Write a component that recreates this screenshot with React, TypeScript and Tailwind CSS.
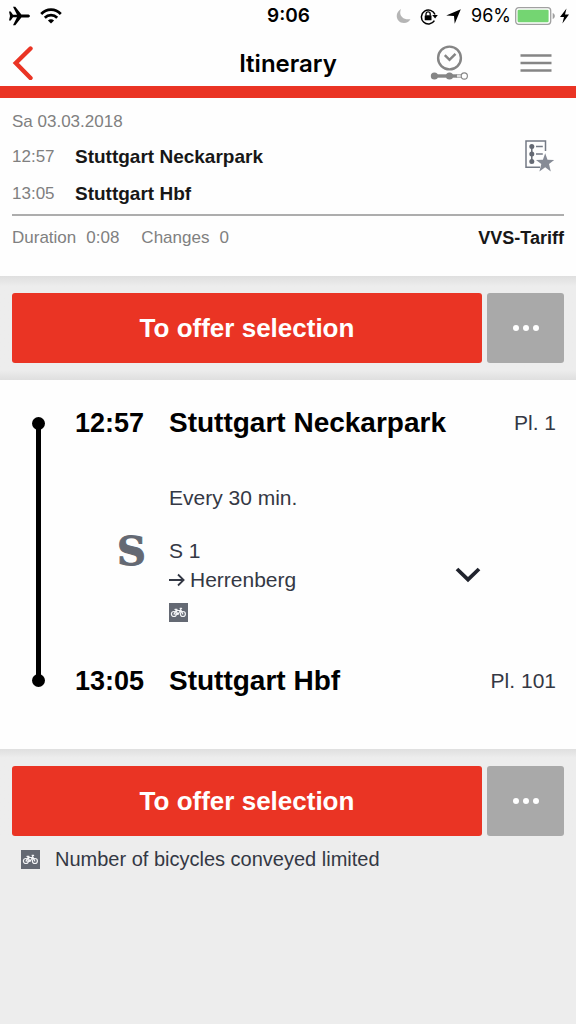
import React from "react";

function BikeIcon() {
  return (
    <svg className="h-[19px] w-[19px] shrink-0" viewBox="0 0 19 19" role="img" aria-label="Bicycle">
      <rect width="19" height="19" fill="#646973" />
      <g fill="none" stroke="#f4f5f7" strokeWidth="1.2" strokeLinecap="round" strokeLinejoin="round">
        <circle cx="4.9" cy="11" r="2.5" />
        <circle cx="13.9" cy="11" r="2.5" />
        <path d="M5 11 7 7.5H11.4L9 11.4ZM7 7.2 9 11.4M13.8 11 11.2 5.4H12.6M6 6.4H8" />
      </g>
    </svg>
  );
}

function StatusBar() {
  return (
    <div className="grid h-8 grid-cols-[1fr_auto_1fr] items-center pr-[7px] pl-2">
      <div className="flex items-center gap-2.5">
        <svg className="h-5 w-[22px]" viewBox="0 0 22 20" aria-hidden="true">
          <path
            d="M1 5.6H2.7L5 8.7H9L5 .8H7.3L13.4 8.5H19.6C21 8.5 22 9.2 22 10S21 11.5 19.6 11.5H13.4L7.3 19.2H5L9 11.3H5L2.7 14.4H1L2 10Z"
            fill="#000"
          />
        </svg>
        <svg className="h-4 w-[22px]" viewBox="0 0 22 16" aria-hidden="true">
          <g fill="none" stroke="#000" strokeWidth="2.7">
            <path d="M1.2 6C6.6.2 15.4.2 20.8 6" />
            <path d="M4.8 9.7C8.2 6.2 13.8 6.2 17.2 9.7" />
          </g>
          <path d="M11 15.6 7.9 12.6C9.6 10.9 12.4 10.9 14.1 12.6Z" fill="#000" />
        </svg>
      </div>
      <span className="font-[Inter,sans-serif] text-[19px] leading-8 font-semibold">9:06</span>
      <div className="flex items-center justify-end">
        <svg className="mr-[9px] h-4 w-[15px]" viewBox="0 0 15 16" aria-hidden="true">
          <path d="M5 1C-2 5 0 15 8 15C11 15 13.3 13.6 14.4 11.2C6.5 12.4 2.4 7 5 1Z" fill="#b5b5b5" />
        </svg>
        <svg className="mr-2 h-[17px] w-[18px]" viewBox="0 0 18 17" aria-hidden="true">
          <path d="M14.4 12.7A7 7 0 1 1 15 6.6" fill="none" stroke="#000" strokeWidth="1.5" />
          <path d="M12.2 7H17.8L15.1 10.4Z" fill="#000" />
          <rect x="4.7" y="7.3" width="6.8" height="5" rx=".6" fill="#000" />
          <path d="M6 7.5V6A2.1 2.1 0 0 1 10.2 6V7.5" fill="none" stroke="#000" strokeWidth="1.3" />
        </svg>
        <svg className="mr-2.5 h-[15px] w-[15px]" viewBox="0 0 15 15" aria-hidden="true">
          <path d="M14.8.2 8.7 14.8 8 7 .2 6.4Z" fill="#000" />
        </svg>
        <span className="mr-1 font-[Inter,sans-serif] text-[18px] leading-8">96%</span>
        <svg className="mr-1 h-[18px] w-[41px]" viewBox="0 0 41 18" aria-hidden="true">
          <rect x=".7" y=".7" width="35" height="16.6" rx="3" fill="#fff" stroke="#a0a0a0" strokeWidth="1.3" />
          <rect x="2.6" y="2.7" width="31" height="12.6" rx="1.2" fill="#74d572" />
          <path d="M37.7 6C40.5 7 40.5 11 37.7 12Z" fill="#a0a0a0" />
        </svg>
        <svg className="h-4 w-[9px]" viewBox="0 0 9 16" aria-hidden="true">
          <path d="M6.5.5 0 9H4L2.4 15.5 9 6.4H5Z" fill="#000" />
        </svg>
      </div>
    </div>
  );
}

function NavBar() {
  return (
    <header className="grid h-[66px] grid-cols-[1fr_auto_1fr] items-center border-b-[12px] border-[#ea3424] px-3 pt-2">
      <a href="#back" aria-label="Back" className="justify-self-start">
        <svg className="h-[34px] w-[22px]" viewBox="0 0 22 34">
          <path d="M18.5 3.5 3.8 18 18.5 33" transform="translate(0 -1)" fill="none" stroke="#ea3424" strokeWidth="4.4" strokeLinecap="round" strokeLinejoin="miter" />
        </svg>
      </a>
      <h1 className="pt-0.5 font-[Inter,sans-serif] text-[24px] leading-8 font-semibold">Itinerary</h1>
      <div className="flex items-center justify-end gap-[52px] pr-3">
        <button type="button" aria-label="Travel alerts">
          <svg className="h-9 w-[38px]" viewBox="0 0 38 36">
            <circle cx="19.5" cy="13" r="11.4" fill="none" stroke="#858585" strokeWidth="2.4" />
            <path d="M14.8 10.2 19.5 14.8 25.5 8.9" fill="none" stroke="#858585" strokeWidth="2.5" />
            <path d="M4 31H27" stroke="#858585" strokeWidth="3.4" />
            <path d="M26 29.8H32M26 32.2H32" stroke="#999" strokeWidth="1" />
            <circle cx="4.4" cy="31" r="3.6" fill="#858585" />
            <circle cx="19.5" cy="31" r="3.6" fill="#858585" />
            <circle cx="34.3" cy="31" r="3.1" fill="#fff" stroke="#858585" strokeWidth="1.1" />
          </svg>
        </button>
        <button type="button" aria-label="Menu">
          <svg className="h-5 w-8" viewBox="0 0 32 20">
            <path d="M.5 2.5H31.5M.5 10H31.5M.5 17.5H31.5" stroke="#858585" strokeWidth="2.7" />
          </svg>
        </button>
      </div>
    </header>
  );
}

function Summary() {
  return (
    <section className="bg-[#fefefe] px-3 pt-3 pb-[26px] text-[17px] leading-6 text-[#808080]">
      <p>Sa 03.03.2018</p>
      <div className="flex items-center justify-between pr-2">
        <dl className="grid grid-cols-[63px_auto] items-center gap-y-[13px] pt-[11px] pb-2">
          <dt>12:57</dt>
          <dd className="text-[19px] font-bold text-[#171717]">Stuttgart Neckarpark</dd>
          <dt>13:05</dt>
          <dd className="text-[19px] font-bold text-[#171717]">Stuttgart Hbf</dd>
        </dl>
        <button type="button" aria-label="Save itinerary" className="-mt-9">
          <svg className="h-8 w-8" viewBox="0 0 32 32">
            <path d="M21.5 11V1H2V27.3H16" fill="none" stroke="#747a85" strokeWidth="1.5" />
            <path d="M7.8 6V22" stroke="#646973" strokeWidth="1.5" />
            <circle cx="7.8" cy="6.4" r="2.5" fill="#646973" />
            <circle cx="7.8" cy="14" r="2.5" fill="#646973" />
            <circle cx="7.8" cy="21.6" r="2.5" fill="#646973" />
            <path d="M12 6.4H18.8M12 14H18.8" stroke="#747a85" strokeWidth="1.5" />
            <path d="M21.2 13.3 23.5 19.8 30.2 20 25 24.1 26.8 31.4 21.2 27.2 15.4 31.4 17.3 24.1 12 20 18.9 19.8Z" fill="#868b96" />
          </svg>
        </button>
      </div>
      <div className="flex items-center border-t-2 border-[#adadad] pt-[10px]">
        <span>Duration</span>
        <span className="ml-2.5">0:08</span>
        <span className="ml-[22px]">Changes</span>
        <span className="ml-2.5">0</span>
        <strong className="ml-auto text-[18px] text-[#171717]">VVS-Tariff</strong>
      </div>
    </section>
  );
}

function OfferActions() {
  return (
    <div className="flex gap-[5px] px-3">
      <button type="button" className="h-[70px] flex-1 rounded-[3px] bg-[#ea3424] text-[26px] font-bold text-white">
        To offer selection
      </button>
      <button type="button" aria-label="More options" className="flex h-[70px] w-[77px] items-center justify-center gap-1 rounded-[3px] bg-[#a9a9a9]">
        <span className="size-1.5 rounded-full bg-white" />
        <span className="size-1.5 rounded-full bg-white" />
        <span className="size-1.5 rounded-full bg-white" />
      </button>
    </div>
  );
}

function Stop({ time, name, platform }: { time: string; name: string; platform: string }) {
  return (
    <div className="flex items-center text-[28px] leading-8">
      <span className="w-[94px] text-[27px] font-bold text-black">{time}</span>
      <span className="flex-1 font-bold text-black">{name}</span>
      <span className="text-[21px]">{platform}</span>
    </div>
  );
}

function Journey() {
  return (
    <section className="flex bg-[#fefefe] pt-[27px] pr-5 pb-[52px] pl-8 text-[#343844]">
      <div className="my-2.5 mr-[30px] flex w-[13px] flex-col items-center">
        <span className="size-[13px] rounded-full bg-black" />
        <span className="-my-1 w-[5px] flex-1 bg-black" />
        <span className="size-[13px] rounded-full bg-black" />
      </div>
      <div className="flex-1">
        <Stop time="12:57" name="Stuttgart Neckarpark" platform="Pl. 1" />
        <div className="pt-11 pb-[43px] text-[21px] leading-[29px]">
          <p className="pl-[94px]">Every 30 min.</p>
          <div className="flex items-start pt-6">
            <span className="w-[94px] pl-[42px] font-['DejaVu_Serif',serif] text-[40px] leading-[29px] font-bold text-[#646973] [-webkit-text-stroke:1px_#646973]">
              S
            </span>
            <div className="flex-1">
              <p>S 1</p>
              <p className="flex items-center gap-[5px]">
                <svg className="h-3.5 w-4" viewBox="0 0 16 14" aria-hidden="true">
                  <path d="M0 7H14.5M9 1.5 14.6 7 9 12.5" fill="none" stroke="#343844" strokeWidth="1.8" />
                </svg>
                Herrenberg
              </p>
              <div className="pt-[9px]">
                <BikeIcon />
              </div>
            </div>
            <button type="button" aria-label="Show stops" className="mt-[31px] mr-[75px]">
              <svg className="h-4 w-[26px]" viewBox="0 0 26 16">
                <path d="M2 2 13 12.7 24 2" fill="none" stroke="#20232d" strokeWidth="3.8" />
              </svg>
            </button>
          </div>
        </div>
        <Stop time="13:05" name="Stuttgart Hbf" platform="Pl. 101" />
      </div>
    </section>
  );
}

export default function App() {
  return (
    <div className="min-h-screen bg-[#ededed] font-['Liberation_Sans',sans-serif]">
      <div className="bg-[#fefefe] text-black">
        <StatusBar />
        <NavBar />
      </div>
      <main>
        <Summary />
        <div className="bg-linear-to-b from-[#dfdfdf] via-[#ededed] via-10% to-[#ededed] pt-[17px]">
          <OfferActions />
          <div className="h-[17px] bg-linear-to-b from-[#ededed] from-40% to-[#dfdfdf]" />
        </div>
        <Journey />
        <div className="bg-linear-to-b from-[#dfdfdf] via-[#ededed] via-10% to-[#ededed] pt-[17px]">
          <OfferActions />
        </div>
        <p className="flex items-center gap-[15px] px-[21px] pt-[9px] text-[20px] leading-7 text-[#343844]">
          <BikeIcon />
          Number of bicycles conveyed limited
        </p>
      </main>
    </div>
  );
}
